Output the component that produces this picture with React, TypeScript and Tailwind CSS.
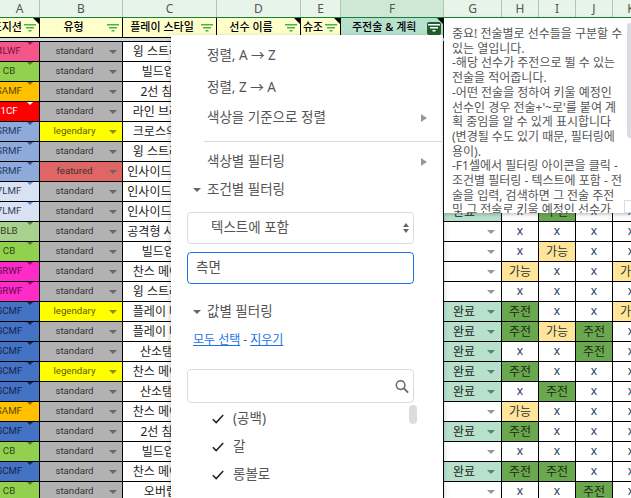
const kr = "font-['Noto_Sans','Noto_Sans_CJK_KR',sans-serif]";

const columns = [
  { id: "A", w: "w-[40px]" },
  { id: "B", w: "w-[83px]" },
  { id: "C", w: "w-[94px]" },
  { id: "D", w: "w-[84px]" },
  { id: "E", w: "w-[40px]" },
  { id: "F", w: "w-[103px]" },
  { id: "G", w: "w-[58px]" },
  { id: "H", w: "w-[37px]" },
  { id: "I", w: "w-[37px]" },
  { id: "J", w: "w-[37px]" },
  { id: "K", w: "w-[37px]" },
];

const pink = { pos: "4LWF", bg: "bg-[#f4568b]", arrow: "border-t-[#a31a4e]", text: "text-[#7a1238]" };
const cb = { pos: "CB", bg: "bg-[#92d050]", arrow: "border-t-[#4f7a26]", text: "text-[#2f4a14]" };
const samf = { pos: "SAMF", bg: "bg-[#ffc000]", arrow: "border-t-[#8a6a00]", text: "text-[#5c4500]" };
const red = { pos: "1CF", bg: "bg-[#ff0000]", arrow: "border-t-white", text: "text-white" };
const srmf = { pos: "SRMF", bg: "bg-[#8eaadb]", arrow: "border-t-[#2f4f8f]", text: "text-[#25375e]" };
const lmf = { pos: "7LMF", bg: "bg-[#d9e2f3]", arrow: "border-t-[#5b8ad6]", text: "text-[#333f55]" };
const blb = { pos: "BLB", bg: "bg-[#a9d18e]", arrow: "border-t-[#4f7a36]", text: "text-[#2c4420]" };
const rwf = { pos: "GRWF", bg: "bg-[#ff2bc8]", arrow: "border-t-[#8a1070]", text: "text-[#5c0a4a]" };
const cmf = { pos: "GCMF", bg: "bg-[#4472c4]", arrow: "border-t-[#14264a]", text: "text-[#14264a]" };

const rows = [
  { a: pink, type: "standard", style: "윙 스트라이커", g: "", t: ["x", "x", "x", "x"] },
  { a: cb, type: "standard", style: "빌드업 CB", g: "", t: ["x", "x", "x", "x"] },
  { a: samf, type: "standard", style: "2선 침투형", g: "", t: ["x", "x", "x", "x"] },
  { a: red, type: "standard", style: "라인 브레이커", g: "", t: ["x", "x", "x", "x"] },
  { a: srmf, type: "legendary", style: "크로스의 달인", g: "", t: ["x", "x", "x", "x"] },
  { a: srmf, type: "standard", style: "윙 스트라이커", g: "", t: ["x", "x", "x", "x"] },
  { a: srmf, type: "featured", style: "인사이드 포워드", g: "", t: ["x", "x", "x", "x"] },
  { a: lmf, type: "standard", style: "인사이드 포워드", g: "", t: ["x", "x", "x", "x"] },
  { a: lmf, type: "standard", style: "인사이드 포워드", g: "완료", t: ["x", "주전", "x", "x"] },
  { a: blb, type: "standard", style: "공격형 사이드백", g: "", t: ["x", "x", "x", "x"] },
  { a: cb, type: "standard", style: "빌드업 CB", g: "", t: ["x", "가능", "x", "x"] },
  { a: rwf, type: "standard", style: "찬스 메이커형", g: "", t: ["가능", "x", "x", "가능"] },
  { a: rwf, type: "standard", style: "윙 스트라이커", g: "", t: ["x", "x", "x", "x"] },
  { a: cmf, type: "legendary", style: "플레이 메이커", g: "완료", t: ["주전", "x", "x", "가능"] },
  { a: cmf, type: "standard", style: "플레이 메이커", g: "완료", t: ["주전", "가능", "주전", "x"] },
  { a: cmf, type: "standard", style: "산소탱크형", g: "완료", t: ["x", "x", "주전", "x"] },
  { a: cmf, type: "legendary", style: "찬스 메이커형", g: "완료", t: ["주전", "x", "x", "x"] },
  { a: cmf, type: "standard", style: "산소탱크형", g: "완료", t: ["x", "주전", "x", "x"] },
  { a: samf, type: "standard", style: "찬스 메이커형", g: "", t: ["가능", "x", "x", "x"] },
  { a: cmf, type: "standard", style: "2선 침투형", g: "완료", t: ["주전", "x", "x", "x"] },
  { a: cb, type: "standard", style: "빌드업 CB", g: "", t: ["x", "x", "x", "x"] },
  { a: cmf, type: "standard", style: "찬스 메이커형", g: "완료", t: ["주전", "주전", "x", "x"] },
  { a: cb, type: "standard", style: "오버랩 형", g: "", t: ["x", "x", "주전", "x"] },
];

const note = [
  "중요! 전술별로 선수들을 구분할 수",
  "있는 열입니다.",
  "-해당 선수가 주전으로 뛸 수 있는",
  "전술을 적어줍니다.",
  "-어떤 전술을 정하여 키울 예정인",
  "선수인 경우 전술+'~로'를 붙여 계",
  "획 중임을 알 수 있게 표시합니다",
  "(변경될 수도 있기 때문, 필터링에",
  "용이).",
  "-F1셀에서 필터링 아이콘을 클릭 -",
  "조건별 필터링 - 텍스트에 포함 - 전",
  "술을 입력, 검색하면 그 전술 주전",
  "및 그 전술로 키울 예정인 선수가",
];

function Arrow({ color = "border-t-[#777]" }: { color?: string }) {
  return <span className={`h-0 w-0 shrink-0 border-x-[4px] border-t-[4px] border-x-transparent ${color}`} />;
}

function FilterIcon({ stroke = "#4caf50" }: { stroke?: string }) {
  return (
    <svg width="12" height="8" viewBox="0 0 12 8" className="shrink-0">
      <path d="M0 .75h12M2 3.75h8M4.5 6.75h3" stroke={stroke} strokeWidth="1.3" fill="none" />
    </svg>
  );
}

function Corner() {
  return (
    <span className="absolute right-0 top-0 h-0 w-0 border-l-[6px] border-t-[6px] border-l-transparent border-t-black" />
  );
}

function HeaderCell({ w, label, end, corner }: { w: string; label: string; end?: boolean; corner?: boolean }) {
  return (
    <div className={`relative flex ${w} shrink-0 items-center overflow-hidden border-r border-black bg-[#ffffcc] pr-[3px] text-[11px] font-medium text-black ${end ? "justify-end gap-[2px]" : ""}`}>
      <span className={`whitespace-nowrap ${end ? "" : "flex flex-1 justify-center"}`}>{label}</span>
      <FilterIcon />
      {corner && <Corner />}
    </div>
  );
}

function TacticCell({ value }: { value: string }) {
  if (value === "주전")
    return <div className="flex w-[37px] shrink-0 items-center justify-center border-r border-black bg-[#6aa84f] text-[12px] text-[#1c2a14]">주전</div>;
  if (value === "가능")
    return <div className="flex w-[37px] shrink-0 items-center justify-center border-r border-black bg-[#ffe599] text-[12px] text-[#333]">가능</div>;
  return <div className="flex w-[37px] shrink-0 items-center justify-center border-r border-black bg-white pb-[1px] text-[12px] text-[#1f3a5c]">x</div>;
}

function Row({ row }: { row: (typeof rows)[number] }) {
  const typeBg =
    row.type === "legendary" ? "bg-[#ffff00]" : row.type === "featured" ? "bg-[#e06666]" : "bg-[#b2b2b2]";
  return (
    <div className="flex h-[20px] shrink-0 border-b border-black">
      <div className={`flex w-[40px] shrink-0 items-center overflow-hidden border-r border-black font-['Roboto',sans-serif] text-[9.7px] ${row.a.bg} ${row.a.text}`}>
        <span className="flex w-[18px] shrink-0 justify-center whitespace-nowrap">{row.a.pos}</span>
        <span className="ml-[8px]">
          <Arrow color={row.a.arrow} />
        </span>
      </div>
      <div className={`flex w-[83px] shrink-0 items-center border-r border-black pr-[5px] font-['Roboto',sans-serif] text-[9.7px] ${typeBg} ${row.type === "legendary" ? "text-[#5c5c00]" : "text-[#333]"}`}>
        <span className="flex flex-1 justify-center">{row.type}</span>
        <Arrow color={row.type === "legendary" ? "border-t-[#8a8a00]" : "border-t-[#666]"} />
      </div>
      <div className="flex w-[94px] shrink-0 items-center justify-center overflow-hidden whitespace-nowrap border-r border-black bg-white pr-[4px] text-[12px] text-[#222]">
        {row.style}
      </div>
      <div className="w-[84px] shrink-0 border-r border-black bg-white" />
      <div className="w-[40px] shrink-0 border-r border-black bg-white" />
      <div className="w-[103px] shrink-0 border-r border-black bg-white" />
      <div className={`flex w-[58px] shrink-0 items-center justify-between border-r border-black pl-[9px] pr-[6px] text-[12px] text-[#222] ${row.g ? "bg-[#b7e1cd]" : "bg-white"}`}>
        <span>{row.g}</span>
        <Arrow color={row.g ? "border-t-[#4f8a6c]" : "border-t-[#999]"} />
      </div>
      {row.t.map((value, i) => (
        <TacticCell key={i} value={value} />
      ))}
    </div>
  );
}

function MenuItem({ label, h, submenu, mt }: { label: string; h: string; submenu?: boolean; mt?: string }) {
  return (
    <div className={`flex ${h} ${mt ?? ""} items-center justify-between pl-[36px] pr-[16px]`}>
      <span>{label}</span>
      {submenu && <span className="h-0 w-0 border-y-[4px] border-l-[6px] border-y-transparent border-l-[#999]" />}
    </div>
  );
}

function Collapse({ label, mt }: { label: string; mt?: string }) {
  return (
    <div className={`flex h-[28px] ${mt ?? ""} items-center gap-[6px] pl-[22px]`}>
      <Arrow color="border-t-[#666]" />
      <span>{label}</span>
    </div>
  );
}

function ValueItem({ label }: { label: string }) {
  return (
    <div className="flex h-[28px] items-center gap-[9px] pl-[41px]">
      <svg width="12" height="10" viewBox="0 0 12 10" className="shrink-0">
        <path d="M.8 5.2l3.4 3.4L11.2 1" stroke="#222" strokeWidth="1.5" fill="none" />
      </svg>
      <span>{label}</span>
    </div>
  );
}

function FilterMenu() {
  return (
    <div className="absolute bottom-0 left-[171px] top-[35px] w-[272px] bg-white pt-[5px] text-[13.5px] leading-none text-[#555] shadow-[0_2px_6px_rgba(60,64,67,0.35)]">
      <MenuItem label="정렬, A → Z" h="h-[32px]" />
      <MenuItem label="정렬, Z → A" h="h-[32px]" />
      <MenuItem label="색상을 기준으로 정렬" h="h-[28px]" submenu />
      <div className="ml-[33px] mr-[1px] mt-[9px] h-px bg-[#d9d9d9]" />
      <MenuItem label="색상별 필터링" h="h-[28px]" mt="mt-[6px]" submenu />
      <Collapse label="조건별 필터링" />
      <div className="ml-[16px] mr-[29px] mt-[8px] flex h-[32px] items-center justify-between rounded-[4px] border border-[#dadce0] pl-[23px] pr-[4px]">
        <span>텍스트에 포함</span>
        <span className="flex flex-col gap-[2px]">
          <span className="h-0 w-0 border-x-[3px] border-b-[4px] border-x-transparent border-b-[#666]" />
          <span className="h-0 w-0 border-x-[3px] border-t-[4px] border-x-transparent border-t-[#666]" />
        </span>
      </div>
      <div className="ml-[16px] mr-[29px] mt-[8px] flex h-[32px] items-center rounded-[4px] border border-[#1a73e8] pl-[8px]">
        측면
      </div>
      <Collapse label="값별 필터링" mt="mt-[14px]" />
      <div className="flex h-[28px] items-center pl-[22px] text-[12px] text-[#1a73e8]">
        <span className="underline">모두 선택</span>
        <span className="px-[3px] text-[#555]">-</span>
        <span className="underline">지우기</span>
      </div>
      <div className="ml-[16px] mr-[29px] mt-[15px] flex h-[34px] items-center justify-end rounded-[4px] border border-[#dadce0] pr-[4px]">
        <svg width="14" height="15" viewBox="0 0 15 15">
          <circle cx="6" cy="6" r="4.6" stroke="#666" strokeWidth="1.6" fill="none" />
          <path d="M9.6 9.6L14 14" stroke="#666" strokeWidth="2" />
        </svg>
      </div>
      <div className="relative mt-[2px]">
        <ValueItem label="(공백)" />
        <ValueItem label="갈" />
        <ValueItem label="롱볼로" />
        <span className="absolute left-[238px] top-0 h-[19px] w-[8px] rounded-[4px] bg-[#dadce0]" />
      </div>
    </div>
  );
}

function NotePopup() {
  return (
    <div className="absolute bottom-[285px] left-[444px] right-0 top-[18px] overflow-hidden bg-white pl-[8px] pt-[9px] text-[12px] leading-[14.7px] text-[#555] shadow-[0_1px_4px_rgba(60,64,67,0.4)]">
      {note.map((line) => (
        <div key={line} className="whitespace-nowrap">
          {line}
        </div>
      ))}
      <span className="absolute right-0 top-[5px] h-[115px] w-[4px] rounded-l-[3px] bg-[#dadce0]" />
      <span className="absolute bottom-0 right-[-4px] h-[13px] w-[11px] border border-[#dadce0] bg-white" />
    </div>
  );
}

export default function App() {
  return (
    <div className={`relative h-[498px] w-[631px] overflow-hidden bg-white ${kr}`}>
      <div className="flex h-[18px] border-b border-[#188038] bg-[#e6f4ea] text-[12px] text-[#555]">
        {columns.map((col) => (
          <div
            key={col.id}
            className={`flex ${col.w} shrink-0 items-center justify-center border-r border-[#b5c4b9] ${col.id === "F" ? "bg-[#cee8d6]" : ""}`}
          >
            {col.id}
          </div>
        ))}
      </div>
      <div className="flex h-[20px] border-b border-black">
        <HeaderCell w="w-[40px]" label="포지션" end corner />
        <HeaderCell w="w-[83px]" label="유형" />
        <HeaderCell w="w-[94px]" label="플레이 스타일" />
        <HeaderCell w="w-[84px]" label="선수 이름" corner />
        <HeaderCell w="w-[40px]" label="슈조" corner />
        <div className="relative flex w-[103px] shrink-0 items-center justify-between border-r border-black bg-[#b7e1cd] pl-[11px] pr-[2px] text-[11px] font-medium text-black">
          <span className="whitespace-nowrap">주전술 &amp; 계획</span>
          <span className="mt-[1px] flex h-[13px] w-[14px] items-center justify-center rounded-[2px] bg-[#1e5e2c]">
            <FilterIcon stroke="#ffffff" />
          </span>
          <Corner />
        </div>
      </div>
      <div className="h-[4px] border-b border-black bg-[#d8dbe0]" />
      {rows.map((row, i) => (
        <Row key={i} row={row} />
      ))}
      <FilterMenu />
      <NotePopup />
    </div>
  );
}
